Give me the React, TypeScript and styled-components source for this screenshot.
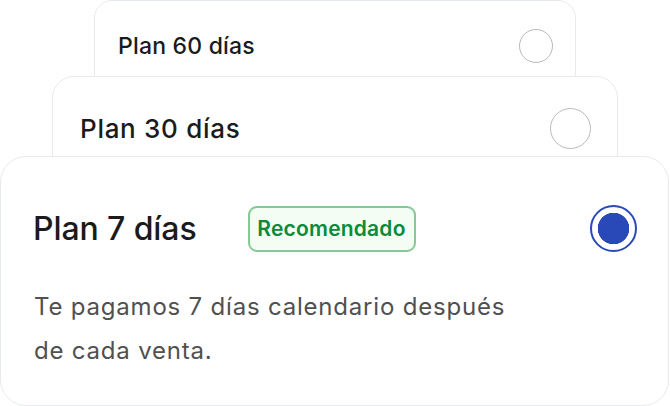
import { FC } from 'react';
import styled, { createGlobalStyle } from 'styled-components';

const GlobalStyle = createGlobalStyle`
  html, body {
    margin: 0;
    padding: 0;
    background: #ffffff;
  }
  body {
    font-family: 'Inter', 'Noto Sans', sans-serif;
    -webkit-font-smoothing: antialiased;
  }
`;

type Level = 'back' | 'middle' | 'front';

interface PlanCardProps {
  title: string;
  level: Level;
  selected?: boolean;
  badge?: string;
  description?: string;
}

const PlanCard: FC<PlanCardProps> = ({
  title,
  level,
  selected = false,
  badge,
  description,
}) => {
  return (
    <Card $level={level}>
      <Row $level={level}>
        <TitleGroup>
          <Title $level={level}>{title}</Title>
          {badge && <Badge>{badge}</Badge>}
        </TitleGroup>
        <Radio $level={level} $selected={selected} />
      </Row>
      {description && <Desc>{description}</Desc>}
    </Card>
  );
};

const App: FC = () => {
  return (
    <>
      <GlobalStyle />
      <Stack>
        <PlanCard level="back" title="Plan 60 días" />
        <PlanCard level="middle" title="Plan 30 días" />
        <PlanCard
          level="front"
          title="Plan 7 días"
          badge="Recomendado"
          selected
          description="Te pagamos 7 días calendario después de cada venta."
        />
      </Stack>
    </>
  );
};

export default App;

const Stack = styled.div`
  width: 670px;
  height: 406px;
  display: flex;
  flex-direction: column;
  overflow: hidden;
`;

const Card = styled.div<{ $level: Level }>`
  position: relative;
  box-sizing: border-box;
  background: #ffffff;
  border: 1px solid #e6ebf0;
  ${({ $level }) =>
    $level === 'back'
      ? `
    margin: 0 94px -24px 94px;
    height: 100px;
    border-radius: 18px;
    padding: 27px 22px 0 23px;
    z-index: 1;
  `
      : $level === 'middle'
      ? `
    margin: 0 52px -20px 52px;
    height: 100px;
    border-radius: 22px;
    padding: 31px 26px 0 27px;
    z-index: 2;
  `
      : `
    margin: 0 1px 0 0;
    height: 250px;
    border-radius: 26px;
    padding: 48px 31px 0 32px;
    z-index: 3;
  `}
`;

const Row = styled.div<{ $level: Level }>`
  display: flex;
  align-items: center;
  justify-content: space-between;
  height: ${({ $level }) =>
    $level === 'back' ? '36px' : $level === 'middle' ? '41px' : '47px'};
`;

const TitleGroup = styled.div`
  display: flex;
  align-items: center;
  gap: 51px;
`;

const Title = styled.div<{ $level: Level }>`
  color: #1b1b1b;
  font-weight: 500;
  font-size: ${({ $level }) =>
    $level === 'back' ? '23px' : $level === 'middle' ? '26px' : '32px'};
  letter-spacing: ${({ $level }) =>
    $level === 'back' ? '0.2px' : $level === 'middle' ? '0.7px' : '-0.1px'};
`;

const Badge = styled.span`
  box-sizing: border-box;
  display: inline-flex;
  align-items: center;
  justify-content: center;
  width: 168px;
  height: 46px;
  border: 2px solid #86c995;
  border-radius: 9px;
  background: #f3fdf4;
  color: #0a8a3b;
  font-size: 21px;
  font-weight: 600;
  letter-spacing: 0.2px;
`;

const Radio = styled.span<{ $level: Level; $selected: boolean }>`
  box-sizing: border-box;
  flex: none;
  border-radius: 50%;
  width: ${({ $level }) =>
    $level === 'back' ? '34px' : $level === 'middle' ? '41px' : '47px'};
  height: ${({ $level }) =>
    $level === 'back' ? '34px' : $level === 'middle' ? '41px' : '47px'};
  border: ${({ $selected }) =>
    $selected ? '2px solid #2a49b9' : '1.5px solid #b7babe'};
  background: ${({ $selected }) =>
    $selected
      ? 'radial-gradient(circle, #2a49b9 0 15.5px, #ffffff 16px)'
      : '#ffffff'};
`;

const Desc = styled.p`
  margin: 33px 0 0 1px;
  width: 490px;
  color: #505050;
  font-size: 24px;
  line-height: 44px;
  font-weight: 400;
  letter-spacing: 0.8px;
`;
